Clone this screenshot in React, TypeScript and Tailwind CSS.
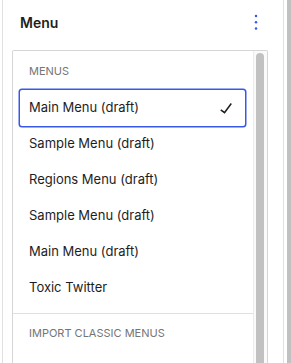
import React from "react";

const items = [
  { label: "Main Menu (draft)", selected: true },
  { label: "Sample Menu (draft)" },
  { label: "Regions Menu (draft)" },
  { label: "Sample Menu (draft)" },
  { label: "Main Menu (draft)" },
  { label: "Toxic Twitter" },
];

export default function App() {
  return (
    <div
      className="w-[291px] h-[363px] overflow-hidden bg-white flex text-[#1e1e1e]"
      style={{ fontFamily: "Inter, 'Noto Sans', sans-serif" }}
    >
      <div className="w-[2px] shrink-0" />
      <div className="w-[282px] shrink-0 border-l border-r border-[#e0e0e0] flex flex-col">
        <div className="h-[44px] flex items-center justify-between pl-[17px] pr-[15px] shrink-0">
          <span className="text-[14px] font-semibold">Menu</span>
          <svg width="24" height="24" viewBox="0 0 24 24" fill="#3858e9">
            <circle cx="12" cy="6" r="1.25" />
            <circle cx="12" cy="12.25" r="1.25" />
            <circle cx="12" cy="18.5" r="1.25" />
          </svg>
        </div>
        <div className="mt-[6px] ml-[9px] w-[256px] flex-1 border border-b-0 border-[#d6d6d6] rounded-t-[2px] flex overflow-hidden">
          <div className="flex-1 flex flex-col">
            <div className="pt-[12px] pl-[7px] pr-[8px] pb-[7px]">
              <div className="h-[16px] leading-[16px] text-[11px] uppercase text-[#757575] pl-[9px] mb-[11px]">
                Menus
              </div>
              {items.map((it, i) => (
                <div
                  key={i}
                  className={
                    it.selected
                      ? "h-9 flex items-center justify-between pl-[9px] pr-[7px] text-[13px] rounded-[2px] shadow-[0_0_0_1.5px_#3858e9]"
                      : "h-9 flex items-center pl-[9px] text-[13px]"
                  }
                >
                  <span>{it.label}</span>
                  {it.selected && (
                    <svg width="24" height="24" viewBox="0 0 24 24" fill="#1e1e1e">
                      <path d="M16.7 7.1l-6.3 8.5-3.2-2.4-.9 1.2 4.4 3.3 7.2-9.7z" />
                    </svg>
                  )}
                </div>
              ))}
            </div>
            <div className="border-t border-[#e0e0e0] pt-[11px] pl-[16px]">
              <div className="h-[16px] leading-[16px] text-[11px] uppercase text-[#757575]">
                Import Classic Menus
              </div>
            </div>
          </div>
          <div className="w-[14px] shrink-0 border-l border-[#ececec] bg-[#fafafa] pt-[2px] pl-[2px]">
            <div className="w-[8px] h-[400px] rounded-full bg-[#c1c1c1]" />
          </div>
        </div>
      </div>
      <div className="w-[3px] shrink-0" />
      <div className="w-[4px] shrink-0 bg-[#c1c1c1]" />
    </div>
  );
}
